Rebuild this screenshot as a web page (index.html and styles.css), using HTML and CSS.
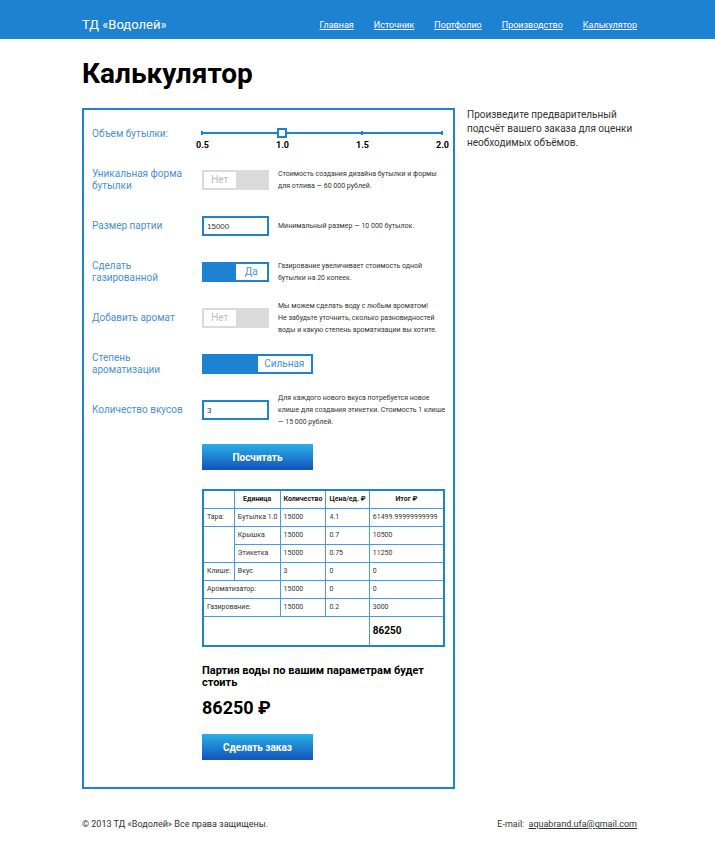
FILE: index.html
```html
<!DOCTYPE html>
<html lang="ru">
<head>
<meta charset="utf-8">
<meta name="viewport" content="width=device-width, initial-scale=1">
<title>Калькулятор — ТД «Водолей»</title>
<link rel="stylesheet" href="styles.css">
</head>
<body>
<header class="top">
  <a class="brand" href="#">ТД «Водолей»</a>
  <nav class="menu">
    <a href="#">Главная</a>
    <a href="#">Источник</a>
    <a href="#">Портфолио</a>
    <a href="#">Производство</a>
    <a href="#">Калькулятор</a>
  </nav>
</header>
<main class="page">
  <h1>Калькулятор</h1>
  <div class="columns">
    <form class="calc">
      <div class="row">
        <label class="name" for="volume">Объем бутылки:</label>
        <div class="slider">
          <input id="volume" type="range" min="0.5" max="2" step="0.5" value="1">
          <div class="scale"><span>0.5</span><span>1.0</span><span>1.5</span><span>2.0</span></div>
        </div>
      </div>
      <div class="row">
        <label class="name" for="shape">Уникальная форма бутылки</label>
        <label class="toggle"><span>Нет</span><input id="shape" type="checkbox"></label>
        <p class="hint">Стоимость создания дизайна бутылки и формы для отлива — 60 000 рублей.</p>
      </div>
      <div class="row">
        <label class="name" for="batch">Размер партии</label>
        <input class="field" id="batch" type="text" value="15000">
        <p class="hint">Минимальный размер — 10 000 бутылок.</p>
      </div>
      <div class="row">
        <label class="name" for="gas">Сделать газированной</label>
        <label class="toggle on"><input id="gas" type="checkbox" checked><span>Да</span></label>
        <p class="hint">Газирование увеличивает стоимость одной бутылки на 20 копеек.</p>
      </div>
      <div class="row">
        <label class="name" for="aroma">Добавить аромат</label>
        <label class="toggle"><span>Нет</span><input id="aroma" type="checkbox"></label>
        <p class="hint">Мы можем сделать воду с любым ароматом!<br>Не забудьте уточнить, сколько разновидностей воды и какую степень ароматизации вы хотите.</p>
      </div>
      <div class="row">
        <label class="name" for="degree">Степень ароматизации</label>
        <label class="toggle on wide"><input id="degree" type="checkbox" checked><span>Сильная</span></label>
      </div>
      <div class="row">
        <label class="name" for="tastes">Количество вкусов</label>
        <input class="field" id="tastes" type="text" value="3">
        <p class="hint">Для каждого нового вкуса потребуется новое клише для создания этикетки. Стоимость 1 клише —&nbsp;15 000 рублей.</p>
      </div>
      <div class="result">
        <button class="btn" type="button">Посчитать</button>
        <table>
          <colgroup><col class="c1"><col class="c2"><col class="c3"><col class="c4"><col></colgroup>
          <tr><th></th><th>Единица</th><th>Количество</th><th>Цена/ед. ₽</th><th>Итог ₽</th></tr>
          <tr><td>Тара:</td><td>Бутылка 1.0</td><td>15000</td><td>4.1</td><td>61499.99999999999</td></tr>
          <tr><td rowspan="2"></td><td>Крышка</td><td>15000</td><td>0.7</td><td>10500</td></tr>
          <tr><td>Этикетка</td><td>15000</td><td>0.75</td><td>11250</td></tr>
          <tr><td>Клише:</td><td>Вкус</td><td>3</td><td>0</td><td>0</td></tr>
          <tr><td colspan="2">Ароматизатор:</td><td>15000</td><td>0</td><td>0</td></tr>
          <tr><td colspan="2">Газирование:</td><td>15000</td><td>0.2</td><td>3000</td></tr>
          <tr class="total"><td colspan="4"></td><td>86250</td></tr>
        </table>
        <h2>Партия воды по вашим параметрам будет стоить</h2>
        <p class="sum">86250 ₽</p>
        <button class="btn" type="button">Сделать заказ</button>
      </div>
    </form>
    <aside class="note">Произведите предварительный подсчёт вашего заказа для оценки необходимых объёмов.</aside>
  </div>
</main>
<footer class="foot">
  <span>© 2013 ТД «Водолей» Все права защищены.</span>
  <span>E-mail: <a href="mailto:aquabrand.ufa@gmail.com">aquabrand.ufa@gmail.com</a></span>
</footer>
</body>
</html>
```
FILE: styles.css
```css
:root {
  --blue: #1e82d2;
  --line: #4b9bdc;
  --label: #4a90d6;
  --grey: #dadada;
}

* {
  box-sizing: border-box;
}

body {
  margin: 0;
  background: #fff;
  color: #333;
  font-family: Roboto, "Noto Sans", sans-serif;
  font-size: 10px;
  line-height: 14px;
}

h1, h2, p {
  margin: 0;
}

.top, .page, .foot {
  padding-left: 82px;
  padding-right: 78px;
}

.top {
  display: flex;
  justify-content: space-between;
  align-items: center;
  height: 39px;
  padding-top: 10px;
  background: var(--blue);
}

.top a {
  color: #fff;
}

.brand {
  font-size: 13px;
  text-decoration: none;
}

.menu {
  display: flex;
  gap: 20px;
  font-size: 9px;
}

h1 {
  padding: 15px 0 14px;
  color: #000;
  font-size: 28px;
  line-height: 40px;
}

.columns {
  display: grid;
  grid-template-columns: 373fr 170fr;
  align-items: start;
  gap: 12px;
}

.calc {
  padding: 1px 8px 27px 8px;
  border: 2px solid var(--blue);
}

.row {
  display: flex;
  align-items: center;
  min-height: 46px;
}

.name {
  flex: none;
  width: 110px;
  padding-right: 16px;
  color: var(--label);
  line-height: 12px;
}

.hint {
  flex: 1;
  margin: 0 -4px 0 9px;
  font-size: 7px;
  line-height: 12px;
}

.slider {
  flex: 1;
  margin: 11px -2px 0 -5px;
}

.slider input {
  display: block;
  width: 100%;
  height: 10px;
  margin: 0;
  appearance: none;
  background:
    linear-gradient(var(--blue), var(--blue)) 5px 4px / calc(100% - 10px) 2px no-repeat,
    linear-gradient(90deg, var(--blue) 2px, transparent 2px) 4px 3px / calc((100% - 10px) / 3) 4px repeat-x;
}

.slider input::-webkit-slider-thumb {
  width: 10px;
  height: 10px;
  appearance: none;
  border: 2px solid var(--blue);
  background: #fff;
}

.scale {
  display: flex;
  justify-content: space-between;
  margin: 0 -4px 0 -3px;
  color: #000;
  font-size: 9px;
  font-weight: bold;
  line-height: 14px;
}

.scale span {
  width: 17px;
  text-align: center;
}

.toggle {
  display: flex;
  flex: none;
  width: 67px;
  height: 20px;
  border: 2px solid var(--grey);
  color: #bbb;
  line-height: 16px;
  text-align: center;
}

.toggle span, .toggle input {
  flex: 1;
  margin: 0;
}

.toggle input {
  appearance: none;
  background: var(--grey);
}

.toggle.on {
  border-color: var(--blue);
  color: var(--label);
}

.toggle.on input {
  background: var(--blue);
}

.toggle.wide, .btn {
  width: 111px;
}

.field {
  flex: none;
  width: 67px;
  height: 20px;
  padding: 0 3px;
  border: 2px solid var(--blue);
  color: #333;
  font-family: "Liberation Sans", sans-serif;
  font-size: 8px;
}

.result {
  padding: 11px 0 0 110px;
}

.btn {
  display: block;
  height: 26px;
  padding: 0;
  border: 0;
  background: linear-gradient(#29b1e6, #1451bd);
  color: #fff;
  font: bold 10px Roboto, "Noto Sans", sans-serif;
}

table {
  width: 100%;
  margin: 19px 0 18px;
  border: 2px solid var(--blue);
  border-collapse: collapse;
  table-layout: fixed;
  font-size: 7px;
  line-height: 8px;
}

.c1 { width: 13%; }
.c2 { width: 19%; }
.c3 { width: 19%; }
.c4 { width: 18%; }

th, td {
  height: 18px;
  padding: 0 3px;
  border: 1px solid var(--line);
  text-align: left;
  white-space: nowrap;
}

th {
  padding: 0;
  color: #222;
  text-align: center;
}

.total td {
  height: 30px;
  color: #000;
  font-size: 10px;
  font-weight: bold;
}

h2 {
  color: #000;
  font-size: 11px;
  line-height: 12px;
}

.sum {
  margin: 9px 0 16px;
  color: #000;
  font-size: 18px;
  font-weight: bold;
  line-height: 20px;
}

.foot {
  display: flex;
  justify-content: space-between;
  padding-top: 28px;
  padding-bottom: 28px;
  font-size: 9px;
}

.foot a {
  margin-left: 2px;
  color: #333;
}
```
